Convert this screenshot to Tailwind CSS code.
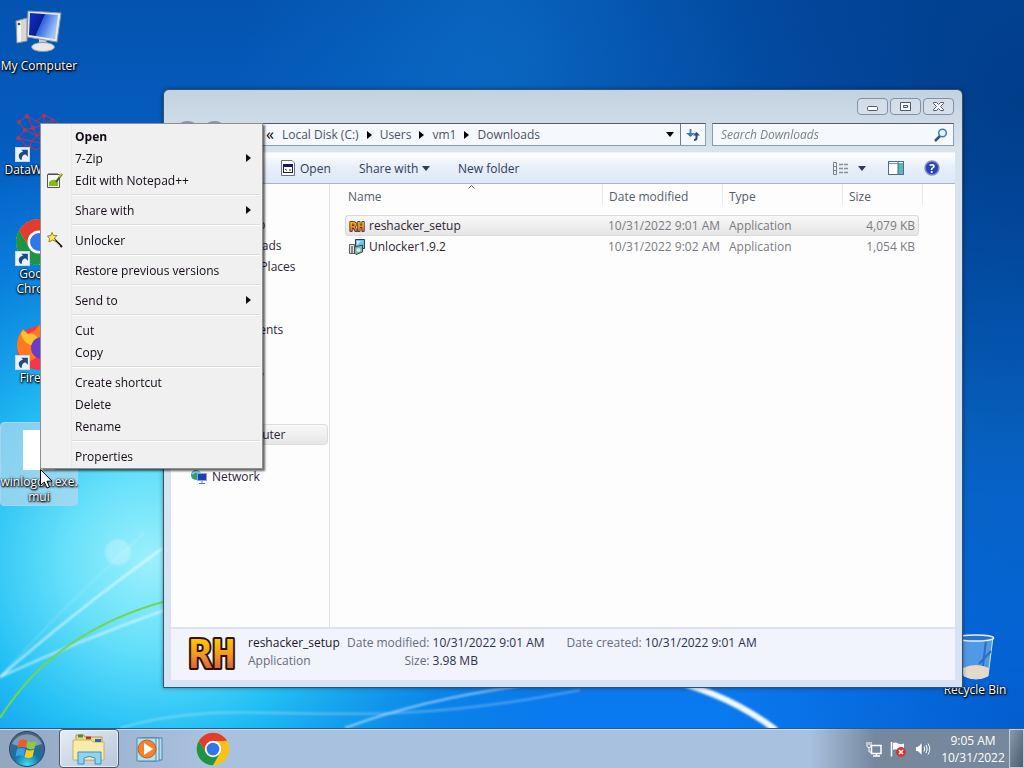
<!DOCTYPE html>
<html lang="en">
<head>
  <meta charset="UTF-8" />
  <meta name="viewport" content="width=device-width, initial-scale=1.0"/>
  <title>Desktop</title>
  <script src="https://cdn.jsdelivr.net/npm/@tailwindcss/browser@4"></script>
</head>
<body class="h-screen overflow-hidden flex flex-col bg-[#0a6fd6] font-['Open_Sans','Noto_Sans',sans-serif] text-[12px] leading-[15px] text-[#1a1020] cursor-default">

  <!-- Shared icons -->
  <svg class="absolute size-0" aria-hidden="true">
    <defs>
      <linearGradient id="rhFill" x1="0" y1="0" x2="0" y2="1"><stop offset=".2" stop-color="#ffc400"/><stop offset=".55" stop-color="#f0902a"/><stop offset=".85" stop-color="#d85a45"/></linearGradient>
      <linearGradient id="screen" x1="0" y1="0" x2="1" y2=".4"><stop offset="0" stop-color="#0a2fd0"/><stop offset=".48" stop-color="#0b1f90"/><stop offset=".5" stop-color="#2f60e0"/><stop offset="1" stop-color="#9cc6fb"/></linearGradient>
    </defs>
    <symbol id="chrome" viewBox="0 0 48 48">
      <circle cx="24" cy="24" r="23" fill="#fbc116"/>
      <path d="M4.1 12.5A23 23 0 0 1 43.9 12.5L24 13L14.5 29.5Z" fill="#e33b2e"/>
      <path d="M4.1 12.5L14.6 30L24 35L33.9 29.8L24 47A23 23 0 0 1 4.1 12.5Z" fill="#1f9447"/>
      <circle cx="24" cy="24" r="11.5" fill="#fff"/>
      <circle cx="24" cy="24" r="9" fill="#3078ea"/>
    </symbol>
    <symbol id="shortcut" viewBox="0 0 14 14">
      <rect x=".5" y=".5" width="13" height="13" fill="#eaf3fb" stroke="#c8d8e8"/>
      <path d="M5 12C2 8 4 5 7.500 4.500L6 2.500L12 2.500L12 9L10 7C7.500 7 6 9 6.500 12Z" fill="#1c4a8c"/>
    </symbol>
    <symbol id="arrow" viewBox="0 0 5 8"><path d="M0 0L5 4L0 8Z" fill="currentColor"/></symbol>
    <symbol id="down" viewBox="0 0 8 5"><path d="M0 0H8L4 5Z" fill="currentColor"/></symbol>
    <symbol id="folder" viewBox="0 0 16 16"><path d="M1 3H6L8 5H15V14H1Z" fill="#f3dc85" stroke="#c9a545"/></symbol>
  </svg>

  <main class="relative flex-1 min-h-0">

    <!-- Wallpaper -->
    <svg class="absolute inset-0 size-full" viewBox="0 0 1024 728" preserveAspectRatio="none" aria-hidden="true">
      <defs>
        <linearGradient id="sky" x1="0" y1="0" x2="0" y2="1"><stop offset="0" stop-color="#0453b0"/><stop offset=".25" stop-color="#055fc4"/><stop offset=".6" stop-color="#0a72d8"/><stop offset="1" stop-color="#0a7af0"/></linearGradient>
        <radialGradient id="dark" gradientUnits="userSpaceOnUse" cx="1024" cy="100" r="560"><stop offset="0" stop-color="#003880" stop-opacity=".85"/><stop offset="1" stop-color="#003a8c" stop-opacity="0"/></radialGradient>
        <radialGradient id="corner" gradientUnits="userSpaceOnUse" cx="1024" cy="728" r="300"><stop offset="0" stop-color="#0050c0" stop-opacity=".7"/><stop offset="1" stop-color="#0050c0" stop-opacity="0"/></radialGradient>
        <radialGradient id="cyan" gradientUnits="userSpaceOnUse" cx="150" cy="560" r="430"><stop offset="0" stop-color="#9cf0fc"/><stop offset=".2" stop-color="#66e0fa"/><stop offset=".42" stop-color="#22bff4"/><stop offset=".75" stop-color="#0a8ae4" stop-opacity=".65"/><stop offset="1" stop-color="#0a80e0" stop-opacity="0"/></radialGradient>
        <radialGradient id="top" gradientUnits="userSpaceOnUse" cx="520" cy="60" r="280"><stop offset="0" stop-color="#0c70c8" stop-opacity=".7"/><stop offset="1" stop-color="#0c70c8" stop-opacity="0"/></radialGradient>
        <filter id="soft"><feGaussianBlur stdDeviation="1"/></filter>
      </defs>
      <rect width="1024" height="728" fill="url(#sky)"/>
      <rect width="1024" height="728" fill="url(#top)"/>
      <rect width="1024" height="728" fill="url(#dark)"/>
      <rect width="1024" height="728" fill="url(#corner)"/>
      <rect width="1024" height="728" fill="url(#cyan)"/>
      <g fill="none" stroke="#fff" filter="url(#soft)">
        <circle cx="118" cy="552" r="13" fill="#fff" stroke="none" opacity=".25"/>
        <path d="M0 677Q70 615 163 548" stroke-width="2" opacity=".7"/>
        <path d="M0 677Q60 610 145 532" opacity=".4"/>
        <path d="M0 677Q80 640 165 610" stroke-width="2" opacity=".6"/>
        <path d="M345 728Q420 700 520 686" stroke-width="2" opacity=".55"/>
        <path d="M120 728C250 690 330 740 580 690" stroke-width="2" opacity=".3"/>
        <path d="M670 680Q730 695 776 730" stroke-width="6" opacity=".95"/>
      </g>
      <path d="M0 718Q55 630 170 600" fill="none" stroke="#72d650" stroke-width="2"/>
    </svg>

    <!-- Desktop icons -->
    <div class="absolute left-0 top-[6px] w-[78px] flex flex-col text-white text-center [text-shadow:1px_1px_2px_#000,0_1px_2px_#000,0_0_2px_#000]">
      <div class="h-[104px] pt-1 flex flex-col items-center">
        <svg class="size-12 shrink-0" viewBox="0 0 48 48">
          <path d="M1 11L12 8V31L2 33Z" fill="#d8d8d2" stroke="#8d9298"/>
          <path d="M2.500 12L6 11V31L2.500 32Z" fill="#f6f6f2"/><circle cx="4" cy="14" r="1.300" fill="#444"/>
          <path d="M24 28H31L32 36H24Z" fill="#c8ccd0"/>
          <ellipse cx="28" cy="37" rx="11.500" ry="4.500" fill="#e6e8ea" stroke="#8f969e"/>
          <path d="M13 1L46 3L42 32L12 27Z" fill="#e4e8ee" stroke="#8a94a2"/>
          <path d="M15 3L43 5L40 29L14 25Z" fill="url(#screen)"/>
        </svg>
        <span class="whitespace-nowrap">My Computer</span>
      </div>
      <div class="h-[104px] pt-1 flex flex-col items-center">
        <div class="relative size-12 shrink-0">
          <svg class="size-12" viewBox="0 0 48 48" fill="none" stroke="#b83060">
            <path d="M4 8L12 2L21 7L29 1L38 5L45 11L40 18L46 26L36 30M4 8L10 16L3 24L11 31L3 38M12 2L18 14L10 16L22 22L18 14L29 11L21 7M29 1L29 11L38 5L36 17L29 11L22 22L36 17M3 24L16 27L22 22L30 30L16 27L14 40M11 31L22 36L30 30"/>
            <g stroke="#e03038"><circle cx="12" cy="2" r="1.500"/><circle cx="29" cy="1.500" r="1.500"/><circle cx="4" cy="8" r="1.500"/><circle cx="10" cy="16" r="1.500"/><circle cx="18" cy="14" r="1.500"/><circle cx="3" cy="24" r="1.500"/></g>
          </svg>
          <svg class="absolute left-0 bottom-0 size-[15px]"><use href="#shortcut"/></svg>
        </div>
        <span class="whitespace-nowrap">DataWarrior</span>
      </div>
      <div class="h-[104px] pt-1 flex flex-col items-center">
        <div class="relative size-12 shrink-0">
          <svg class="size-12"><use href="#chrome"/></svg>
          <svg class="absolute left-0 bottom-0 size-[15px]"><use href="#shortcut"/></svg>
        </div>
        <span>Google<br>Chrome</span>
      </div>
      <div class="h-[104px] pt-1 flex flex-col items-center">
        <div class="relative size-12 shrink-0">
          <svg class="size-12" viewBox="0 0 48 48">
            <circle cx="24" cy="26" r="22" fill="#f2374e"/>
            <path d="M2 24C2 16 5 11 8 7L13 12C16 10 19 10 20 8C22 5 24 3 26 2C27 9 33 11 35 18L30 30L14 40C6 37 2 31 2 24Z" fill="#ff7a1c"/>
            <path d="M6 12L8 8L13 12C17 11 20 12 23 16L18 19L20 23C14 24 9 21 6 12Z" fill="#ffc12e"/>
            <circle cx="27" cy="26" r="11" fill="#6a3cc8"/>
          </svg>
          <svg class="absolute left-0 bottom-0 size-[15px]"><use href="#shortcut"/></svg>
        </div>
        <span>Firefox</span>
      </div>
      <div class="h-[84px] pt-[3px] flex flex-col items-center bg-[#b4d8f0]/70 border border-[#a8d4f0] rounded-sm">
        <div class="size-12 shrink-0 pt-1 pl-2"><div class="w-8 h-10 bg-white"></div></div>
        <span>winlogon.exe.<br>mui</span>
      </div>
    </div>

    <div class="absolute right-[9px] bottom-[31px] w-20 flex flex-col items-center text-white [text-shadow:1px_1px_2px_#000,0_1px_2px_#000,0_0_2px_#000]">
      <svg class="size-12" viewBox="0 0 48 48">
        <path d="M7 3L42 3L37 42Q25 48 13 42Z" fill="#8fc4f4" fill-opacity=".55" stroke="#cfe6fa"/>
        <path d="M12 34Q25 28 38 34L37 42Q25 48 13 42Z" fill="#e6d9c8"/>
        <path d="M35 6L32 32M40 17L28 30" stroke="#2a6cc0" stroke-width="2"/>
        <ellipse cx="24.500" cy="4" rx="18" ry="3" fill="#2a72c8" stroke="#e3eef8" stroke-width="1.500"/>
      </svg>
      <span class="whitespace-nowrap">Recycle Bin</span>
    </div>

    <!-- Explorer window -->
    <section class="absolute left-[163px] right-[61px] top-[89px] bottom-10 flex flex-col px-[7px] pb-[7px] rounded-t-md border border-[#33506e] bg-linear-to-b from-[#c3d2e0] from-0% via-[#d9e3ed] via-10% to-[#d5e3f4] shadow-[0_0_4px_rgba(0,0,0,.4)]">
      <div class="flex justify-end gap-[2px] h-[33px] pt-2 pr-px">
        <button class="w-[31px] h-[17px] grid place-items-center rounded-sm border border-[#8291a6] bg-white/20" aria-label="Minimize">
          <svg width="13" height="11" viewBox="0 0 13 11"><rect x="1.500" y="5.500" width="10" height="4" rx="1" fill="#fff" stroke="#4d5868"/></svg>
        </button>
        <button class="w-[31px] h-[17px] grid place-items-center rounded-sm border border-[#8291a6] bg-white/20" aria-label="Maximize">
          <svg width="13" height="11" viewBox="0 0 13 11"><path d="M1.500 1.500H11.500V9.500H1.500ZM4.500 4.500V6.500H8.500V4.500Z" fill="#fff" stroke="#4d5868" fill-rule="evenodd"/></svg>
        </button>
        <button class="w-[31px] h-[17px] grid place-items-center rounded-sm border border-[#8291a6] bg-white/20" aria-label="Close">
          <svg width="13" height="11" viewBox="0 0 13 11"><path d="M1.500 1.500H4.500L6.500 3.500L8.500 1.500H11.500V2.500L8.500 5.500L11.500 8.500V9.500H8.500L6.500 7.500L4.500 9.500H1.500V8.500L4.500 5.500L1.500 2.500V1.500Z" fill="#fff" stroke="#4d5868"/></svg>
        </button>
      </div>

      <div class="flex items-center gap-[6px] h-[23px] pr-px text-[#4c5264]">
        <div class="flex items-center w-14 pl-[3px]">
          <button class="size-[27px] shrink-0 rounded-full border-2 border-[#8b97a5] bg-[#b9c9da]" aria-label="Back"></button>
          <button class="size-[27px] shrink-0 rounded-full border-2 border-[#8b97a5] bg-[#b9c9da]" aria-label="Forward"></button>
        </div>
        <div class="flex flex-1 h-full items-center border border-[#8b9bb0] border-t-[#4f5d70] bg-[#f5f9fe] pl-8">
          <nav class="flex flex-1 items-center gap-2 whitespace-nowrap">
            <span class="text-base leading-[15px] text-black">«</span>
            <a href="#">Local Disk (C:)</a><svg class="w-[5px] h-2 text-black"><use href="#arrow"/></svg>
            <a href="#">Users</a><svg class="w-[5px] h-2 text-black"><use href="#arrow"/></svg>
            <a href="#">vm1</a><svg class="w-[5px] h-2 text-black"><use href="#arrow"/></svg>
            <a href="#">Downloads</a>
          </nav>
          <button class="px-[6px]" aria-label="Previous locations"><svg class="w-2 h-[5px] text-black"><use href="#down"/></svg></button>
          <button class="h-full w-[25px] grid place-items-center border-l border-[#6c7c92]" aria-label="Refresh">
            <svg width="14" height="13" viewBox="0 0 14 13" fill="none"><path d="M4.500 1V8" stroke="#4a84c4" stroke-width="2"/><path d="M0 5H9L4.500 9Z" fill="#3d78b8"/><path d="M10.500 6V10Q10.500 12 8 12" stroke="#264a80" stroke-width="2"/><path d="M7 7.500L10.500 4L14 7.500Z" fill="#264a80"/></svg>
          </button>
        </div>
        <label class="flex items-center w-[242px] h-full border border-[#8b9bb0] border-t-[#4f5d70] bg-[#f5f9fe] pl-2 pr-[5px]">
          <input type="text" placeholder="Search Downloads" aria-label="Search Downloads" class="flex-1 min-w-0 italic outline-none placeholder:text-[#7d818b]"/>
          <svg width="14" height="14" viewBox="0 0 14 14" fill="none"><path d="M1 13L6 8" stroke="#35527a" stroke-width="2.500"/><circle cx="8.500" cy="5" r="3.800" stroke="#3f7fa8" stroke-width="1.500" fill="#e4f4fc"/></svg>
        </label>
      </div>

      <!-- Command bar -->
      <div class="flex items-center h-8 mt-[6px] pl-[110px] pr-[15px] border-y border-t-[#eef4fb] border-b-[#a3b4cc] bg-linear-to-b from-[#fafcff] from-10% via-[#e6eefa] via-50% to-[#dfe8f6] text-[#2f3c58]">
        <button class="flex items-center gap-[5px] w-[78px]">
          <svg width="14" height="16" viewBox="0 0 14 16"><path d="M.5 .5H11L13.500 3V15.500H.5Z" fill="#fff" stroke="#6c7078"/><rect x="2.500" y="4.500" width="9" height="8" fill="#fff" stroke="#15204a"/><path d="M2 5.500H12" stroke="#101a66" stroke-width="3"/><path d="M4 9L6 10.500M9 9L9 11" stroke="#333"/></svg>
          Open
        </button>
        <button class="flex items-center gap-1 w-[99px]">Share with <svg class="w-2 h-[5px]"><use href="#down"/></svg></button>
        <button>New folder</button>
        <div class="ml-auto flex items-center">
          <button class="flex items-center gap-[10px]" aria-label="Change your view">
            <svg width="16" height="13" viewBox="0 0 16 13" fill="none"><path d="M1.500 .5H4.500V12.500H1.500ZM1.500 4.500H4.500M1.500 8.500H4.500" stroke="#7c828c"/><path d="M7 2.500H16M7 6.500H16M7 10.500H16" stroke="#8a8f98" stroke-width="1.500" stroke-dasharray="4 1"/></svg>
            <svg class="w-2 h-[5px]"><use href="#down"/></svg>
          </button>
          <button class="ml-[22px]" aria-label="Show the preview pane">
            <svg width="16" height="14" viewBox="0 0 16 14"><rect x=".5" y=".5" width="15" height="13" fill="#fff" stroke="#4e6a8c"/><path d="M1 2.500H15" stroke="#8098b4"/><rect x="10" y="2" width="5" height="11" fill="#5fb3bd"/><path d="M10 1V13" stroke="#3f6d88"/></svg>
          </button>
          <button class="ml-5" aria-label="Get help">
            <svg width="16" height="16" viewBox="0 0 16 16"><circle cx="8" cy="8" r="7" fill="#2843b4" stroke="#8c94bc" stroke-width="1.500"/><text x="8" y="12.500" text-anchor="middle" font-family="Open Sans, sans-serif" font-weight="700" font-size="12" fill="#fff">?</text></svg>
          </button>
        </div>
      </div>

      <div class="flex flex-1 min-h-0 bg-[#fdfdfe]">
        <!-- Navigation pane -->
        <nav class="w-[159px] shrink-0 border-r border-[#dce4f0] pt-[9px] flex flex-col text-[#2c2434]">
          <a href="#" class="h-[21px] pl-[41px] flex items-center">Favorites</a>
          <a href="#" class="h-[21px] pl-7 flex items-center gap-1"><svg class="size-4"><use href="#folder"/></svg>Desktop</a>
          <a href="#" class="h-[21px] pl-7 flex items-center gap-1"><svg class="size-4"><use href="#folder"/></svg>Downloads</a>
          <a href="#" class="h-[21px] pl-7 flex items-center gap-1"><svg class="size-4"><use href="#folder"/></svg>Recent Places</a>
          <a href="#" class="h-[21px] mt-[21px] pl-[41px] flex items-center">Libraries</a>
          <a href="#" class="h-[21px] pl-7 flex items-center gap-1"><svg class="size-4"><use href="#folder"/></svg>Documents</a>
          <a href="#" class="h-[21px] pl-7 flex items-center gap-1"><svg class="size-4"><use href="#folder"/></svg>Music</a>
          <a href="#" class="h-[21px] pl-7 flex items-center gap-1"><svg class="size-4"><use href="#folder"/></svg>Pictures</a>
          <a href="#" class="h-[21px] pl-7 flex items-center gap-1"><svg class="size-4"><use href="#folder"/></svg>Videos</a>
          <a href="#" class="h-[21px] mt-[21px] mr-px pl-[57px] flex items-center rounded-sm border border-[#dcdcdc] bg-linear-to-b from-[#f8f8f8] to-[#e6e6e6]">Computer</a>
          <a href="#" class="h-[21px] mt-[21px] pl-5 flex items-center gap-[5px]">
            <svg class="size-4" viewBox="0 0 16 16"><circle cx="5" cy="6" r="5" fill="#2e9c78"/><path d="M1 5Q5 1 9 4" stroke="#7fd2e8" stroke-width="2" fill="none"/><rect x="6.500" y="4.500" width="9" height="7" fill="#1e3fb8" stroke="#8fa4cc"/><path d="M11 12V14M8 14.500H14" stroke="#6c7c9c"/></svg>
            Network
          </a>
        </nav>

        <!-- File list -->
        <div class="relative flex-1 min-w-0 pl-[15px]">
          <svg class="absolute left-[138px] top-px" width="7" height="4" viewBox="0 0 7 4"><path d="M.5 3.500L3.500 .5L6.500 3.500" fill="none" stroke="#5a6878"/></svg>
          <table class="table-fixed w-[578px] border-separate border-spacing-0 whitespace-nowrap">
            <thead>
              <tr class="h-[31px] text-left align-top text-[#565b6c]">
                <th class="w-[258px] p-0 font-normal"><div class="pl-[3px] pt-[5px] pb-px border-r border-[#e6eaf0]">Name</div></th>
                <th class="w-[120px] p-0 font-normal"><div class="pl-[6px] pt-[5px] pb-px border-r border-[#e6eaf0]">Date modified</div></th>
                <th class="w-[120px] p-0 font-normal"><div class="pl-[6px] pt-[5px] pb-px border-r border-[#e6eaf0]">Type</div></th>
                <th class="w-[76px] p-0 font-normal"><div class="pl-[6px] pt-[5px] pb-px">Size</div></th>
                <th class="w-1 p-0"><div class="h-[21px] border-r border-[#e6eaf0]"></div></th>
              </tr>
            </thead>
            <tbody class="text-[#7b7b80]">
              <tr class="h-[21px]">
                <td class="p-0 pl-[3px] border border-r-0 border-[#d9d9d9] rounded-l-sm bg-linear-to-b from-[#f8f8f8] to-[#e5e5e5] text-[#2c2430]"><div class="flex items-center gap-1"><svg class="w-4 h-[15px]" viewBox="0 0 48 40"><text x="24" y="35" text-anchor="middle" font-family="DejaVu Sans Mono, monospace" font-weight="700" font-size="39" fill="url(#rhFill)" stroke="#2a1208" stroke-width="4" stroke-linejoin="round" paint-order="stroke">RH</text></svg>reshacker_setup</div></td>
                <td class="p-0 pl-[5px] border-y border-[#d9d9d9] bg-linear-to-b from-[#f8f8f8] to-[#e5e5e5]">10/31/2022 9:01 AM</td>
                <td class="p-0 pl-[6px] border-y border-[#d9d9d9] bg-linear-to-b from-[#f8f8f8] to-[#e5e5e5]">Application</td>
                <td class="p-0 pr-[3px] border border-l-0 border-[#d9d9d9] rounded-r-sm bg-linear-to-b from-[#f8f8f8] to-[#e5e5e5] text-right">4,079 KB</td>
              </tr>
              <tr class="h-[21px]">
                <td class="p-0 pl-1 text-[#2c2430]"><div class="flex items-center gap-1"><svg class="size-4" viewBox="0 0 16 16"><path d="M6.500 .5H15.500V9.500H6.500Z" fill="#6fc0f4" stroke="#24405c"/><path d="M8 2H12L8 6Z" fill="#d8f0ff"/><path d="M.5 5.500H5.500V14.500H.5Z" fill="#e8e6d8" stroke="#555c60"/><path d="M5.500 8L13.500 6V13L7 15.500L5.500 14Z" fill="#7cb8a4" stroke="#3c4650"/><circle cx="9.500" cy="11" r="2" fill="#d8ece4"/><path d="M3 7V14" stroke="#222"/></svg>Unlocker1.9.2</div></td>
                <td class="p-0 pl-[5px]">10/31/2022 9:02 AM</td>
                <td class="p-0 pl-[6px]">Application</td>
                <td class="p-0 pr-1 text-right">1,054 KB</td>
              </tr>
            </tbody>
          </table>
        </div>
      </div>

      <!-- Details pane -->
      <div class="flex h-[53px] pl-[17px] pt-[5px] border-t-2 border-[#dde3ee] bg-[#f1f4fc] leading-[18px] text-[#666b7e] whitespace-nowrap">
        <svg class="w-12 h-10 shrink-0" viewBox="0 0 48 40"><text x="24" y="34" text-anchor="middle" font-family="DejaVu Sans Mono, monospace" font-weight="700" font-size="39" fill="url(#rhFill)" stroke="#2a1208" stroke-width="4" stroke-linejoin="round" paint-order="stroke">RH</text></svg>
        <div class="ml-3 w-[93px]"><div class="text-[#1c1428]">reshacker_setup</div><div>Application</div></div>
        <dl class="ml-[6px] grid grid-cols-[auto_auto] gap-x-[3px] content-start">
          <dt class="text-right">Date modified:</dt><dd class="text-[#2c3048]">10/31/2022 9:01 AM</dd>
          <dt class="text-right">Size:</dt><dd class="text-[#2c3048]">3.98 MB</dd>
        </dl>
        <dl class="ml-[22px] flex gap-[3px]">
          <dt>Date created:</dt><dd class="text-[#2c3048]">10/31/2022 9:01 AM</dd>
        </dl>
      </div>
    </section>

    <!-- Context menu -->
    <div role="menu" class="absolute left-10 top-[123px] w-[223px] py-px border border-[#8f8f8f] bg-linear-to-r from-[#f1f1f1] from-[30px] via-[#e0e0e0] via-[30px] to-[#f0f0f0] to-[31px] shadow-[2px_2px_2px_rgba(0,0,0,.6)] flex flex-col text-[#150a18]">
      <button role="menuitem" class="h-[22px] pl-[34px] text-left font-bold">Open</button>
      <button role="menuitem" class="h-[22px] pl-[34px] pr-[11px] flex items-center justify-between">7-Zip<svg class="w-[5px] h-2"><use href="#arrow"/></svg></button>
      <button role="menuitem" class="h-[22px] pl-[6px] flex items-center gap-3">
        <svg class="size-4" viewBox="0 0 16 16"><path d="M.5 2.500H12.500V15.500H.5Z" fill="#f4f6f4" stroke="#555"/><path d="M2 1V3M4 1V3M6 1V3M8 1V3M10 1V3" stroke="#444"/><path d="M2 10Q6 6 11 9V14H2Z" fill="#86b81c"/><path d="M15 2L9 10" stroke="#3b5a18" stroke-width="2"/><path d="M14.500 1.500L12 5" stroke="#d6c420" stroke-width="2"/></svg>Edit with Notepad++
      </button>
      <hr class="my-[3px] ml-[31px] mr-[2px] border-t-[#dcdcdc] border-b border-b-white"/>
      <button role="menuitem" class="h-[22px] pl-[34px] pr-[11px] flex items-center justify-between">Share with<svg class="w-[5px] h-2"><use href="#arrow"/></svg></button>
      <hr class="my-[3px] ml-[31px] mr-[2px] border-t-[#dcdcdc] border-b border-b-white"/>
      <button role="menuitem" class="h-[22px] pl-[6px] flex items-center gap-3">
        <svg class="size-4" viewBox="0 0 16 16"><path d="M6 6L15 15" stroke="#141414" stroke-width="2"/><path d="M7 8L13 14" stroke="#d8b470"/><path d="M5 .5L6.500 3.500L10 3.500L7.500 6L9 9.500L5.500 8L2 10L2.500 6.500L.5 4L4 3.500Z" fill="#fbe95a" stroke="#7a6418" stroke-width=".8"/></svg>Unlocker
      </button>
      <hr class="my-[3px] ml-[31px] mr-[2px] border-t-[#dcdcdc] border-b border-b-white"/>
      <button role="menuitem" class="h-[22px] pl-[34px] text-left">Restore previous versions</button>
      <hr class="my-[3px] ml-[31px] mr-[2px] border-t-[#dcdcdc] border-b border-b-white"/>
      <button role="menuitem" class="h-[22px] pl-[34px] pr-[11px] flex items-center justify-between">Send to<svg class="w-[5px] h-2"><use href="#arrow"/></svg></button>
      <hr class="my-[3px] ml-[31px] mr-[2px] border-t-[#dcdcdc] border-b border-b-white"/>
      <button role="menuitem" class="h-[22px] pl-[34px] text-left">Cut</button>
      <button role="menuitem" class="h-[22px] pl-[34px] text-left">Copy</button>
      <hr class="my-[3px] ml-[31px] mr-[2px] border-t-[#dcdcdc] border-b border-b-white"/>
      <button role="menuitem" class="h-[22px] pl-[34px] text-left">Create shortcut</button>
      <button role="menuitem" class="h-[22px] pl-[34px] text-left">Delete</button>
      <button role="menuitem" class="h-[22px] pl-[34px] text-left">Rename</button>
      <hr class="my-[3px] ml-[31px] mr-[2px] border-t-[#dcdcdc] border-b border-b-white"/>
      <button role="menuitem" class="h-[22px] pl-[34px] text-left">Properties</button>
    </div>

    <!-- Mouse pointer -->
    <svg class="absolute left-10 top-[469px]" width="13" height="20" viewBox="0 0 13 20"><path d="M.5 .5V16.500L4.300 13L7 19L9.500 18L7 12.200H12Z" fill="#fff" stroke="#000"/></svg>
  </main>

  <!-- Taskbar -->
  <footer class="relative h-10 flex items-center border-t border-[#2b5a86] shadow-[inset_0_1px_0_#c8dcf0] bg-linear-to-r from-[#93a6bf] via-[#a8c1df] via-20% to-[#a8c1df] text-white">
    <button class="w-[54px] grid place-items-center" aria-label="Start">
      <svg width="38" height="38" viewBox="0 0 38 38">
        <defs><radialGradient id="orb" cx=".5" cy=".95" r=".85"><stop offset="0" stop-color="#3fe0f4"/><stop offset=".45" stop-color="#1272a4"/><stop offset="1" stop-color="#4a6484"/></radialGradient></defs>
        <circle cx="19" cy="19" r="17.500" fill="url(#orb)" stroke="#27435f"/>
        <path d="M4 14A16 15 0 0 1 34 14Q19 20 4 14Z" fill="#fff" opacity=".35"/>
        <path d="M11 11Q15 8.500 19 10.500L17.500 18Q14 16 9.500 18Z" fill="#ef5a28"/>
        <path d="M20 11Q24 13.500 28.500 11L26.500 18.500Q22.500 20.500 18.500 18Z" fill="#93c83a"/>
        <path d="M9 19Q13 17 17.300 19L15.500 26.500Q12 24.500 7.500 26.500Z" fill="#38a0e6"/>
        <path d="M18.300 19.500Q22 21.500 26.200 19.500L24.500 27Q20.500 29 16.500 27Z" fill="#fdc727"/>
      </svg>
    </button>
    <button class="ml-[5px] w-[60px] h-[39px] grid place-items-center rounded-sm border border-[#47586e] bg-linear-to-br from-[#e6edf6] to-[#b6c6da] shadow-[inset_0_0_0_1px_rgba(255,255,255,.6)]" aria-label="File explorer">
      <svg width="36" height="32" viewBox="0 0 36 32">
        <path d="M5 2H13L14 4H31V27H5Z" fill="#f0da84" stroke="#b7974a"/>
        <path d="M7 3H12" stroke="#3c9440" stroke-width="3"/><path d="M15 5H20" stroke="#b03a30" stroke-width="3"/>
        <path d="M2 7H20L22 9H33V27H2Z" fill="#f8ecaa" stroke="#cbb264"/><path d="M24 7.500H30" stroke="#2f62c4" stroke-width="3"/>
        <path d="M7 31V19H30V31H24V25Q18 22 13 25V31Z" fill="#8fd2f2" stroke="#3b90c2"/>
      </svg>
    </button>
    <button class="w-[62px] grid place-items-center" aria-label="Media player">
      <svg width="28" height="26" viewBox="0 0 28 26">
        <path d="M8 2H26V24H8Z" fill="#b8dcee" stroke="#4889b0"/><path d="M4 2H23V25H4Z" fill="#d3ebf6" stroke="#4889b0"/><path d="M1 2H20V25H1Z" fill="#b6dff2" stroke="#4889b0"/>
        <circle cx="11" cy="13" r="9" fill="#f0842c" stroke="#c95e12"/><path d="M8 7L17 13L8 19Z" fill="#fff"/>
      </svg>
    </button>
    <button class="w-16 grid place-items-center" aria-label="Chrome"><svg class="size-[34px]"><use href="#chrome"/></svg></button>

    <div class="ml-auto h-full flex items-center pl-14 bg-linear-to-r from-transparent to-[#76889e] to-30%">
      <svg class="mr-2" width="16" height="16" viewBox="0 0 16 16" fill="none"><path d="M5.500 4.500H15V12.500H5.500Z" stroke="#fff" stroke-width="1.500"/><path d="M7 15H14M10.500 13V15" stroke="#fff" stroke-width="1.500"/><path d="M1 1V5Q1 6.500 3 6.500V11H6M3 1V4M5 1V5Q5 6.500 3 6.500" stroke="#fff"/></svg>
      <svg class="mr-2" width="17" height="16" viewBox="0 0 17 16"><path d="M1.500 1V15.500" stroke="#fff" stroke-width="1.500"/><path d="M3 2Q6 1 8 2.500Q11 4 14 2.500V9Q10 10 8 9Q5 7.500 3 9Z" fill="#fff"/><circle cx="11" cy="11" r="5" fill="#d8352c"/><path d="M9 9L13 13M13 9L9 13" stroke="#fff" stroke-width="1.500"/></svg>
      <svg width="16" height="14" viewBox="0 0 16 14" fill="none"><path d="M.5 4.500H3L7 .5V13.500L3 9.500H.5Z" fill="#fff" stroke="#4b596c" stroke-width=".5"/><path d="M9 4.500Q10.500 7 9 9.500M11 3Q13.500 7 11 11M13 1.500Q16.500 7 13 12.500" stroke="#fff"/></svg>
      <div class="w-[78px] pl-[6px] leading-[17px] text-center whitespace-nowrap"><div>9:05 AM</div><div>10/31/2022</div></div>
      <button class="w-[15px] h-full border border-[#c2cedb] bg-linear-to-br from-[#8a9aad] to-[#4c5c70]" aria-label="Show desktop"></button>
    </div>
  </footer>

</body>
</html>
